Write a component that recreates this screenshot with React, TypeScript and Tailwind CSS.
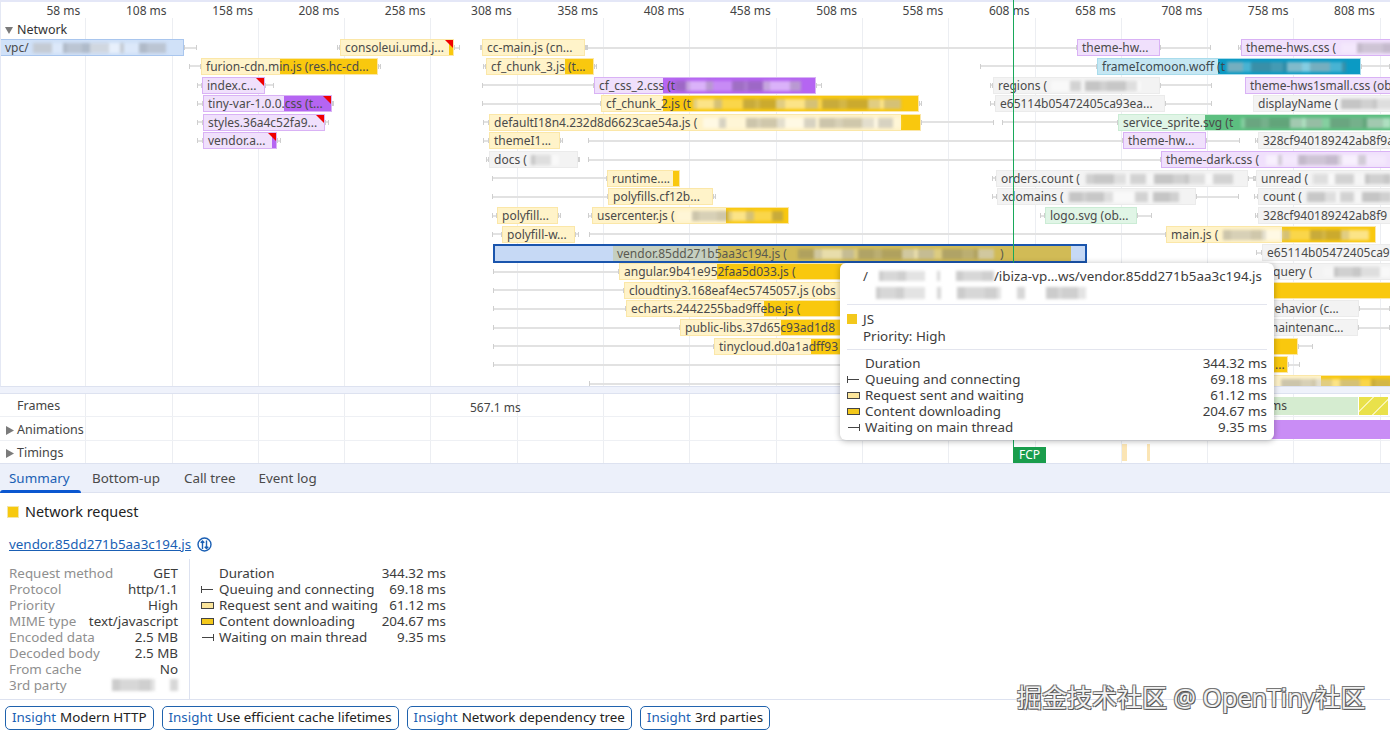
import { Fragment } from "react";

type Kind = "js" | "css" | "doc" | "img" | "font" | "other";

type Req = {
  r: number; // row
  a: number; // bar start
  b?: number; // download start
  c: number; // bar end
  l?: number; // whisker left
  e?: number; // whisker right
  t?: string;
  k: Kind;
  red?: boolean;
  s?: [number, number]; // blurred part of the url
};

const kinds: Record<Kind, { light: string; dark: string }> = {
  js: { light: "bg-[#fff3c9] border-[#fbe7a8]", dark: "bg-[#f9c80e]" },
  css: { light: "bg-[#f0e0fc] border-[#d9b2f5]", dark: "bg-[#b565f2]" },
  doc: { light: "bg-[#d0e1f8] border-[#a9c6ee]", dark: "bg-[#5f8fdc]" },
  img: { light: "bg-[#e0f5e6] border-[#cbecd5]", dark: "bg-[#5cbf80]" },
  font: { light: "bg-[#c5e7f3] border-[#a9dcec]", dark: "bg-[#0b9ac4]" },
  other: { light: "bg-[#f3f3f3] border-[#ebebeb]", dark: "bg-[#dddddd]" },
};

const requests: Req[] = [
  { r: 0, a: 0, b: 182, c: 184, e: 197, t: "vpc/", k: "doc", s: [32, 165] },
  { r: 0, a: 340, b: 448, c: 454, l: 337, e: 460, t: "consoleui.umd.j...", k: "js", red: true },
  { r: 0, a: 482, c: 585, l: 480, e: 587, t: "cc-main.js (cn...", k: "js" },
  { r: 0, a: 1077, c: 1160, l: 587, e: 1211, t: "theme-hw...", k: "css" },
  { r: 0, a: 1241, c: 1396, l: 1238, t: "theme-hws.css (", k: "css", s: [1340, 1392] },

  { r: 1, a: 201, b: 279, c: 378, l: 189, e: 381, t: "furion-cdn.min.js (res.hc-cd...", k: "js" },
  { r: 1, a: 486, b: 564, c: 594, l: 483, e: 597, t: "cf_chunk_3.js (t...", k: "js" },
  { r: 1, a: 1097, b: 1217, c: 1361, l: 980, e: 1390, t: "frameIcomoon.woff (t", k: "font", s: [1226, 1345] },

  { r: 2, a: 202, b: 263, c: 265, l: 197, e: 274, t: "index.c...", k: "css", red: true },
  { r: 2, a: 594, b: 662, c: 816, l: 482, e: 822, t: "cf_css_2.css (t", k: "css", s: [674, 800] },
  { r: 2, a: 993, c: 1160, l: 990, e: 1212, t: "regions (", k: "other", s: [1050, 1140] },
  { r: 2, a: 1245, c: 1396, t: "theme-hws1small.css (ob", k: "css" },

  { r: 3, a: 203, b: 283, c: 332, l: 197, e: 334, t: "tiny-var-1.0.0.css (t...", k: "css", red: true },
  { r: 3, a: 601, b: 662, c: 919, l: 482, e: 922, t: "cf_chunk_2.js (t", k: "js", s: [692, 900] },
  { r: 3, a: 995, c: 1165, l: 990, e: 1212, t: "e65114b05472405ca93ea...", k: "other" },
  { r: 3, a: 1253, c: 1396, t: "displayName (", k: "other", s: [1340, 1392] },

  { r: 4, a: 203, c: 325, l: 197, e: 329, t: "styles.36a4c52fa9...", k: "css", red: true },
  { r: 4, a: 489, b: 900, c: 921, l: 483, e: 994, t: "defaultI18n4.232d8d6623cae54a.js (", k: "js", s: [702, 900] },
  { r: 4, a: 1118, b: 1204, c: 1396, l: 1002, t: "service_sprite.svg (t", k: "img", s: [1240, 1390] },

  { r: 5, a: 203, b: 271, c: 277, l: 197, e: 281, t: "vendor.a...", k: "css", red: true },
  { r: 5, a: 489, c: 560, l: 483, e: 563, t: "themeI1...", k: "js" },
  { r: 5, a: 1123, c: 1206, l: 588, e: 1240, t: "theme-hw...", k: "css" },
  { r: 5, a: 1258, c: 1396, l: 1255, t: "328cf940189242ab8f9a", k: "other" },

  { r: 6, a: 489, c: 578, l: 486, e: 579, t: "docs (", k: "other", s: [530, 558] },
  { r: 6, a: 1161, c: 1396, l: 588, t: "theme-dark.css (", k: "css", s: [1265, 1385] },

  { r: 7, a: 607, b: 672, c: 680, l: 492, t: "runtime....", k: "js" },
  { r: 7, a: 996, c: 1248, l: 992, e: 1255, t: "orders.count (", k: "other", s: [1085, 1232] },
  { r: 7, a: 1256, c: 1396, l: 1253, t: "unread (", k: "other", s: [1312, 1390] },

  { r: 8, a: 608, c: 713, l: 492, e: 716, t: "polyfills.cf12b...", k: "js" },
  { r: 8, a: 997, c: 1196, l: 992, e: 1239, t: "xdomains (", k: "other", s: [1068, 1178] },
  { r: 8, a: 1258, c: 1396, l: 1254, t: "count (", k: "other", s: [1306, 1390] },

  { r: 9, a: 497, c: 558, l: 492, e: 561, t: "polyfill...", k: "js" },
  { r: 9, a: 592, b: 725, c: 789, l: 588, t: "usercenter.js (", k: "js", s: [676, 782] },
  { r: 9, a: 1045, c: 1137, l: 1040, e: 1152, t: "logo.svg (ob...", k: "img" },
  { r: 9, a: 1258, c: 1396, l: 1255, t: "328cf940189242ab8f9", k: "other" },

  { r: 10, a: 502, b: 573, c: 575, l: 492, e: 579, t: "polyfill-w...", k: "js" },
  { r: 10, a: 1166, b: 1281, c: 1376, l: 589, t: "main.js (", k: "js", s: [1222, 1368] },

  { r: 11, a: 1262, c: 1396, l: 1256, t: "e65114b05472405ca9", k: "other" },

  { r: 12, a: 619, b: 716, c: 860, l: 493, t: "angular.9b41e952faa5d033.js (", k: "js" },
  { r: 12, a: 1265, c: 1396, t: "jquery (", k: "other", s: [1322, 1390] },

  { r: 13, a: 624, c: 860, l: 493, t: "cloudtiny3.168eaf4ec5745057.js (obs", k: "js" },
  { r: 13, a: 1200, b: 1200, c: 1396, k: "js" },

  { r: 14, a: 626, b: 763, c: 860, l: 493, t: "echarts.2442255bad9ffebe.js (", k: "js" },
  { r: 14, a: 1262, c: 1359, e: 1390, t: "behavior (c...", k: "other" },

  { r: 15, a: 680, b: 780, c: 860, l: 493, t: "public-libs.37d65c93ad1d8", k: "js" },
  { r: 15, a: 1262, c: 1358, e: 1390, t: "maintenanc...", k: "other" },

  { r: 16, a: 714, b: 810, c: 860, l: 493, t: "tinycloud.d0a1adff93", k: "js" },
  { r: 16, a: 1200, b: 1200, c: 1298, e: 1313, k: "js" },

  { r: 17, a: 1200, b: 1200, c: 1288, l: 493, e: 1300, k: "js" },
  { r: 17, a: 1270, b: 1270, c: 1288, t: "...", k: "js" },

  { r: 18, a: 1270, b: 1320, c: 1396, l: 589, k: "js", s: [1280, 1390] },
];

const marks = ["58 ms", "108 ms", "158 ms", "208 ms", "258 ms", "308 ms", "358 ms", "408 ms", "458 ms", "508 ms", "558 ms", "608 ms", "658 ms", "708 ms", "758 ms", "808 ms"];

const details = [
  ["Request method", "GET"],
  ["Protocol", "http/1.1"],
  ["Priority", "High"],
  ["MIME type", "text/javascript"],
  ["Encoded data", "2.5 MB"],
  ["Decoded body", "2.5 MB"],
  ["From cache", "No"],
];

const timings = [
  { icon: "", label: "Duration", value: "344.32 ms" },
  { icon: "start", label: "Queuing and connecting", value: "69.18 ms" },
  { icon: "wait", label: "Request sent and waiting", value: "61.12 ms" },
  { icon: "down", label: "Content downloading", value: "204.67 ms" },
  { icon: "end", label: "Waiting on main thread", value: "9.35 ms" },
];

const insights = ["Modern HTTP", "Use efficient cache lifetimes", "Network dependency tree", "3rd parties"];

const smudgeTones = ["#9a9a9a66", "#ffffff80", "#7f7f7f66", "#d0d0d099", "#ffffff40", "#6f6f6f55", "#bdbdbd99"];

// blurred out parts of urls in the screenshot
const Smudge = ({ w, seed = 1, h = "h-[10px]" }: { w: number; seed?: number; h?: string }) => {
  const n = Math.max(3, Math.round(w / 12));
  return (
    <div className={`flex shrink-0 blur-[1.6px] ${h}`} style={{ width: w }}>
      {Array.from({ length: n }).map((_, i) => (
        <div
          key={i}
          style={{
            flexGrow: 1 + ((seed * 7 + i * 13) % 5),
            background: smudgeTones[(seed * 3 + i * 5) % smudgeTones.length],
          }}
        />
      ))}
    </div>
  );
};

const Gridlines = () => (
  <div className="absolute inset-0 flex pointer-events-none">
    {marks.map((m) => (
      <div key={m} className="w-[86.3px] h-full shrink-0 border-r border-[#eceef2]" />
    ))}
  </div>
);

const Arrow = ({ open }: { open?: boolean }) => (
  <svg width="8" height="9" viewBox="0 0 8 9" className="shrink-0">
    <path d={open ? "M0 1h8L4 8z" : "M0 0l8 4.5L0 9z"} fill="#7b7b7b" />
  </svg>
);

const Whisker = ({ from, to }: { from: number; to: number }) => (
  <div
    className="absolute top-[7px] h-[5px] flex items-center border-x border-[#cfcfcf]"
    style={{ left: from, width: to - from }}
  >
    <div className="w-full h-[2px] bg-[#e2e2e2]" />
  </div>
);

const Bar = ({ q, i }: { q: Req; i: number }) => {
  const kind = kinds[q.k];
  return (
    <Fragment>
      {q.l !== undefined && <Whisker from={q.l} to={q.a} />}
      {q.e !== undefined && <Whisker from={q.c} to={q.e} />}
      <div
        className={`absolute top-px h-[17px] border overflow-hidden ${kind.light}`}
        style={{ left: q.a, width: q.c - q.a }}
      >
        {q.b !== undefined && (
          <div className={`absolute inset-y-0 right-0 ${kind.dark}`} style={{ left: q.b - q.a }} />
        )}
        {q.t && (
          <span className={`absolute left-[4px] top-0 leading-[15px] whitespace-nowrap ${q.k === "font" ? "text-[#3d4a50]" : "text-[#4a4a4a]"}`}>
            {q.t}
          </span>
        )}
        {q.s && (
          <div className="absolute top-[3px]" style={{ left: q.s[0] - q.a }}>
            <Smudge w={q.s[1] - q.s[0]} seed={i + 2} />
          </div>
        )}
        {q.red && (
          <div className="absolute right-0 top-0 w-0 h-0 border-t-[8px] border-l-[8px] border-t-[#f00000] border-l-transparent" />
        )}
      </div>
    </Fragment>
  );
};

const TimingIcon = ({ type }: { type: string }) => (
  <svg width="13" height="9" viewBox="0 0 13 9" className="shrink-0">
    {type === "start" && <path d="M.5 1v7M.5 4.5H12" stroke="#444" fill="none" />}
    {type === "end" && <path d="M12.5 1v7M1 4.5h11.5" stroke="#444" fill="none" />}
    {type === "wait" && <rect x=".5" y="1.5" width="12" height="6" fill="#fbe59b" stroke="#444" />}
    {type === "down" && <rect x=".5" y="1.5" width="12" height="6" fill="#f3c81b" stroke="#444" />}
  </svg>
);

const TimingList = () => (
  <div>
    {timings.map((t) => (
      <div key={t.label} className="flex items-center h-4 text-[13.4px] text-[#3c3c3c]">
        <TimingIcon type={t.icon} />
        <span className="ml-[5px]">{t.label}</span>
        <span className="ml-auto">{t.value}</span>
      </div>
    ))}
  </div>
);

export default function App() {
  return (
    <div className="relative w-[1390px] h-[734px] overflow-hidden flex flex-col bg-white text-[12px] text-[#444] font-['Noto_Sans','Liberation_Sans',sans-serif]">
      {/* ruler + network track */}
      <div className="relative h-[387px] shrink-0 border-t-2 border-b border-l border-t-[#e4e7f7] border-b-[#dde2f0] border-l-[#e4e8f4] overflow-hidden">
        <div className="absolute top-4 bottom-0 -left-px right-0">
          <Gridlines />
        </div>
        <div className="relative flex h-[16px] -ml-px">
          {marks.map((m) => (
            <div key={m} className="w-[86.3px] shrink-0 text-right pr-[6px] leading-[18px] text-[#444]">
              {m}
            </div>
          ))}
        </div>
        <div className="relative flex items-center gap-[4px] h-[20.2px] pl-1 pt-[4px] text-[12.5px] text-[#333]">
          <Arrow open />
          Network
        </div>
        <div className="relative -ml-px h-[349px]">
          {Array.from({ length: 19 }).map((_, r) => (
            <div key={r} className="relative h-[18.67px]">
              {requests.map((q, i) => (q.r === r ? <Bar key={i} q={q} i={i} /> : null))}
              {r === 11 && (
                <div className="absolute left-[493px] top-[1px] w-[594px] h-[19px] border-2 border-[#1a55ad] bg-[#c6d9f5] overflow-hidden">
                  <div className="absolute left-[118px] inset-y-0 w-[105px] bg-[#c5cfc0]" />
                  <div className="absolute left-[223px] inset-y-0 w-[353px] bg-[#d1bb56]" />
                  <span className="absolute left-[122px] top-0 leading-[15px] whitespace-nowrap text-[#5a5a50]">
                    vendor.85dd271b5aa3c194.js (
                  </span>
                  <div className="absolute left-[303px] top-[3px]">
                    <Smudge w={196} seed={4} />
                  </div>
                  <span className="absolute left-[505px] top-0 leading-[15px] text-[#5a5a50]">)</span>
                </div>
              )}
            </div>
          ))}
        </div>
      </div>

      <div className="h-[7px] shrink-0 bg-[#eff2fb] border-b border-[#dde2f0]" />

      {/* frames, animations, timings */}
      <div className="relative h-[69px] shrink-0 text-[12.5px] text-[#444]">
        <div className="absolute inset-0">
          <Gridlines />
        </div>
        <div className="relative h-[23px] flex items-center pl-[17px] pt-[2px] border-b border-[#eef0f4]">
          Frames
          <span className="absolute left-[470px] top-[5px] text-[12px]">567.1 ms</span>
          <div className="absolute left-[1200px] top-[3px] w-[158px] h-[18px] bg-[#d5ecd0] pl-[70px] leading-[18px] text-[12px]">
            ms
          </div>
          <div className="absolute left-[1359px] top-[3px] w-[29px] h-[18px] bg-[repeating-linear-gradient(-45deg,#e9e14b_0,#e9e14b_10px,#f8f4b0_10px,#f8f4b0_12px)]" />
        </div>
        <div className="relative h-[24px] flex items-center gap-[3px] pl-[6px] pt-[3px] border-b border-[#eef0f4]">
          <Arrow />
          Animations
          <div className="absolute left-[1200px] right-0 top-[3px] h-[19px] bg-[#c98df5]" />
        </div>
        <div className="relative h-[22px] flex items-center gap-[3px] pl-[6px] pt-[2px]">
          <Arrow />
          Timings
          <div className="absolute left-[1122px] top-[3px] w-[5px] h-[17px] bg-[#fbe5b5]" />
          <div className="absolute left-[1147px] top-[3px] w-[3px] h-[17px] bg-[#fbe5b5]" />
        </div>
      </div>

      {/* tabs */}
      <div className="h-[30px] shrink-0 flex bg-[#ecf0fa] border-y border-[#dde2f0] text-[13.4px] text-[#4a4a4a]">
        <div className="relative w-[81px] pl-[9px] leading-[29px] text-[#1a5fb4]">
          Summary
          <div className="absolute left-0 right-0 bottom-[-1px] h-[3px] rounded-t bg-[#0b57d0]" />
        </div>
        <div className="ml-[11px] leading-[29px]">Bottom-up</div>
        <div className="ml-[24px] leading-[29px]">Call tree</div>
        <div className="ml-[23px] leading-[29px]">Event log</div>
      </div>

      {/* summary */}
      <div className="h-[206px] shrink-0 flex flex-col text-[13.4px]">
        <div className="h-[36px] shrink-0 flex items-center gap-[6px] pl-[7px] pt-px text-[14.4px] text-[#222]">
          <div className="w-3 h-3 bg-[#f7c90f] border border-[#f4e6a8]" />
          Network request
        </div>
        <div className="h-[30px] shrink-0 flex items-center gap-[6px] pl-[9px]">
          <span className="text-[#1a5fb4] underline">vendor.85dd271b5aa3c194.js</span>
          <svg width="15" height="15" viewBox="0 0 15 15" fill="none" stroke="#1a5fb4" strokeWidth="1.4">
            <circle cx="7.5" cy="7.5" r="6.5" />
            <path d="M5.5 12V4M3.7 5.8l1.8-1.8 1.8 1.8M9.5 3.5v8M7.7 9.7l1.8 1.8 1.8-1.8" />
          </svg>
        </div>
        <div className="flex-1 flex">
          <div className="w-[190px] shrink-0 border-r border-[#dde2f0] pl-[9px] pr-[11px] pt-[6px]">
            {details.map(([k, v]) => (
              <div key={k} className="flex justify-between h-4 leading-4">
                <span className="text-[#8f8f8f]">{k}</span>
                <span className="text-[#3c3c3c]">{v}</span>
              </div>
            ))}
            <div className="flex justify-between items-center h-4 leading-4">
              <span className="text-[#8f8f8f]">3rd party</span>
              <Smudge w={66} seed={3} h="h-[12px]" />
            </div>
          </div>
          <div className="w-[245px] ml-[11px] pt-[6px]">
            <TimingList />
          </div>
        </div>
      </div>

      {/* insight chips */}
      <div className="flex-1 flex gap-[8px] pl-[5px] pt-[6px] border-t border-[#dde2f0] text-[13.4px] text-[#222]">
        {insights.map((x) => (
          <div key={x} className="h-[24px] px-[6px] pb-[2px] flex items-center gap-[4px] border border-[#1f62ad] rounded-[5px] whitespace-nowrap">
            <span className="text-[#1a5fb4]">Insight</span>
            {x}
          </div>
        ))}
      </div>

      {/* FCP marker */}
      <div className="absolute left-[1013px] top-0 w-px h-[447px] bg-[#18a85a]" />
      <div className="absolute left-[1013px] top-[447px] w-[33px] h-[16px] bg-[#1a9d4c] text-white text-[12px] leading-[16px] text-center">
        FCP
      </div>

      {/* hover tooltip */}
      <div className="absolute left-[840px] top-[263px] w-[434px] h-[177px] bg-white rounded-md shadow-[0_1px_6px_rgba(0,0,0,0.3)] px-[7px] pt-[5px] text-[13.4px] text-[#3c3c3c]">
        <div className="h-4 flex items-center justify-end leading-4 pr-[5px] whitespace-nowrap">
          <span>/</span>
          <Smudge w={126} seed={6} />
          <span>/ibiza-vp...ws/vendor.85dd271b5aa3c194.js</span>
        </div>
        <div className="h-[17px] pl-[17px] pt-[3px]">
          <Smudge w={222} seed={6} h="h-[12px]" />
        </div>
        <div className="mt-[3px] border-t border-[#e3e5ee]" />
        <div className="mt-[6px] h-4 flex items-center gap-[6px] leading-4">
          <div className="w-[10px] h-[10px] bg-[#f3c81b]" />
          JS
        </div>
        <div className="h-[18px] pl-[16px] leading-[18px]">Priority: High</div>
        <div className="mt-[4px] border-t border-[#e3e5ee]" />
        <div className="mt-[5px]">
          <TimingList />
        </div>
      </div>

      {/* watermark */}
      <div className="absolute left-[1017px] top-[681px] text-[25px] leading-[32px] whitespace-nowrap text-[#f2f2f2] [text-shadow:1px_1px_0_#555,-1px_-1px_0_#777,1px_-1px_0_#777,-1px_1px_0_#777] font-['Noto_Sans','Noto_Sans_CJK_SC',sans-serif]">
        掘金技术社区 @ OpenTiny社区
      </div>
    </div>
  );
}
